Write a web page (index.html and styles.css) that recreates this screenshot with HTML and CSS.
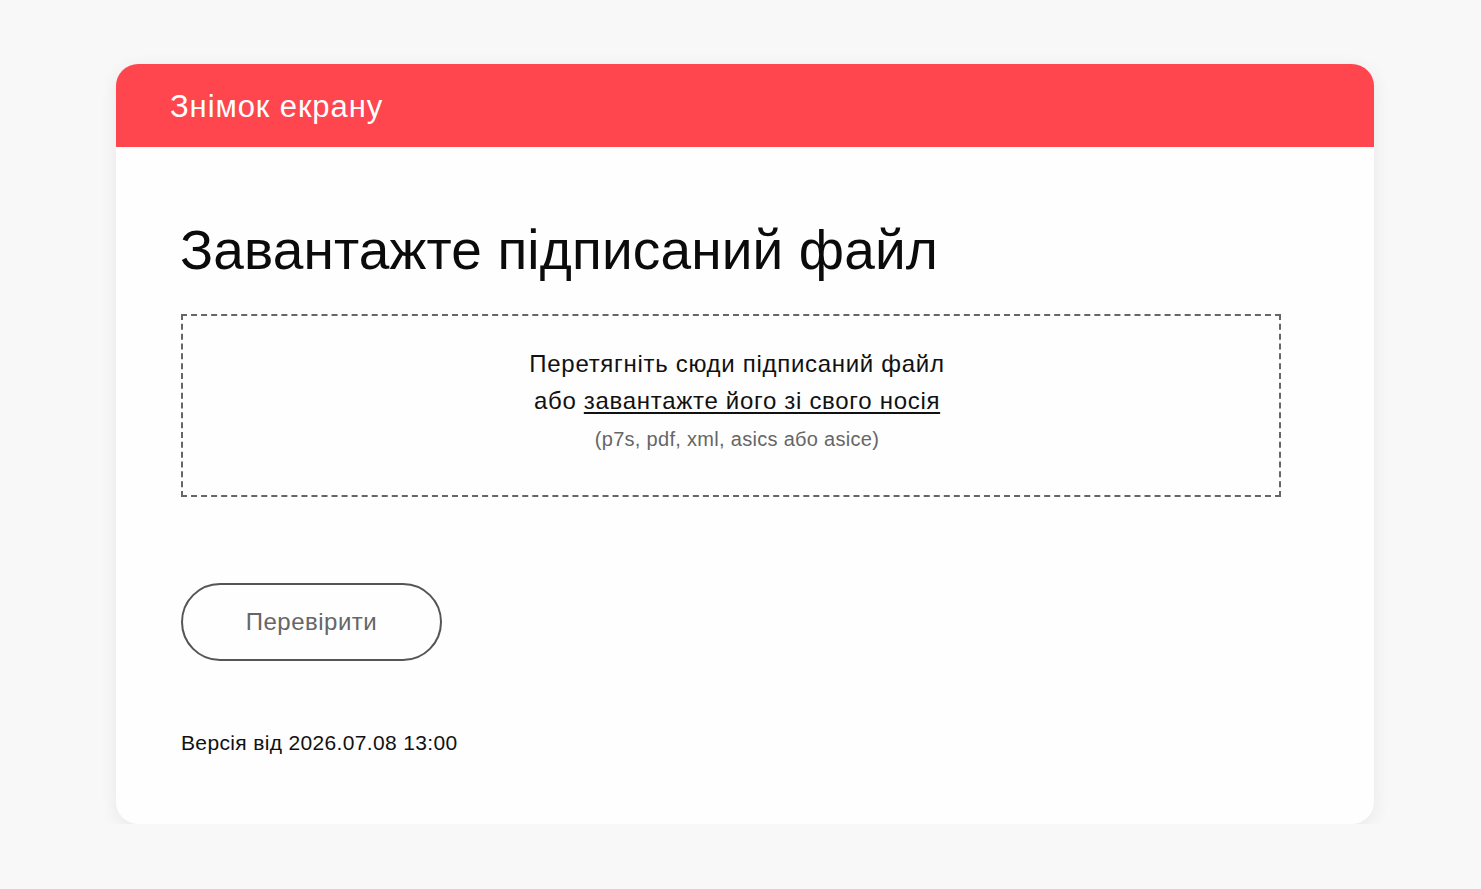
FILE: index.html
```html
<!DOCTYPE html>
<html lang="uk">
<head>
<meta charset="utf-8">
<title>Знімок екрану</title>
<link rel="stylesheet" href="styles.css">
</head>
<body>
<div class="card">
  <div class="card-header">Знімок екрану</div>
  <div class="card-body">
    <h1 class="title">Завантажте підписаний файл</h1>
    <div class="dropzone">
      <div class="drop-line">Перетягніть сюди підписаний файл</div>
      <div class="drop-line">або <a class="drop-link" href="#">завантажте його зі свого носія</a></div>
      <div class="drop-hint">(p7s, pdf, xml, asics або asice)</div>
    </div>
    <button class="check-btn" type="button">Перевірити</button>
    <div class="version">Версія від 2026.07.08 13:00</div>
  </div>
</div>
</body>
</html>
```
FILE: styles.css
```css
html, body {
  margin: 0;
  padding: 0;
}
body {
  background: #f8f8f8;
  font-family: "Liberation Sans", Arial, sans-serif;
  color: #111;
  padding-top: 64px;
  padding-left: 116px;
}
.card {
  width: 1258px;
  height: 760px;
  background: #fefefe;
  border-radius: 22px;
  overflow: hidden;
  box-shadow: 0 4px 18px rgba(0, 0, 0, 0.07);
}
.card-header {
  height: 83px;
  background: #ff464f;
  color: #fff;
  font-size: 31px;
  letter-spacing: 0.9px;
  display: flex;
  align-items: center;
  padding-left: 54px;
  padding-top: 2px;
  box-sizing: border-box;
}
.card-body {
  padding: 0 93px 0 64px;
}
.title {
  margin: 73px 0 0 0;
  font-size: 55px;
  font-weight: 400;
  line-height: 60px;
  letter-spacing: 0.15px;
  color: #0b0b0b;
}
.dropzone {
  margin-top: 34px;
  margin-left: 1px;
  height: 183px;
  box-sizing: border-box;
  border: 2px dashed #666;
  display: flex;
  flex-direction: column;
  align-items: center;
  justify-content: center;
  padding-left: 12px;
  padding-bottom: 15px;
}
.drop-line {
  font-size: 24px;
  line-height: 37px;
  letter-spacing: 0.7px;
  color: #111;
}
.drop-link {
  color: #111;
  text-decoration: underline;
  text-underline-offset: 3px;
  text-decoration-thickness: 2px;
}
.drop-hint {
  margin-top: 8px;
  font-size: 20px;
  line-height: 24px;
  letter-spacing: 0.3px;
  color: #666;
}
.check-btn {
  display: block;
  margin-top: 86px;
  margin-left: 1px;
  width: 261px;
  height: 78px;
  border: 2px solid #555;
  border-radius: 40px;
  background: transparent;
  font-family: "Liberation Sans", Arial, sans-serif;
  font-size: 24px;
  letter-spacing: 0.5px;
  color: #666;
}
.version {
  margin-top: 70px;
  margin-left: 1px;
  font-size: 21px;
  letter-spacing: 0.35px;
  color: #111;
}
```
